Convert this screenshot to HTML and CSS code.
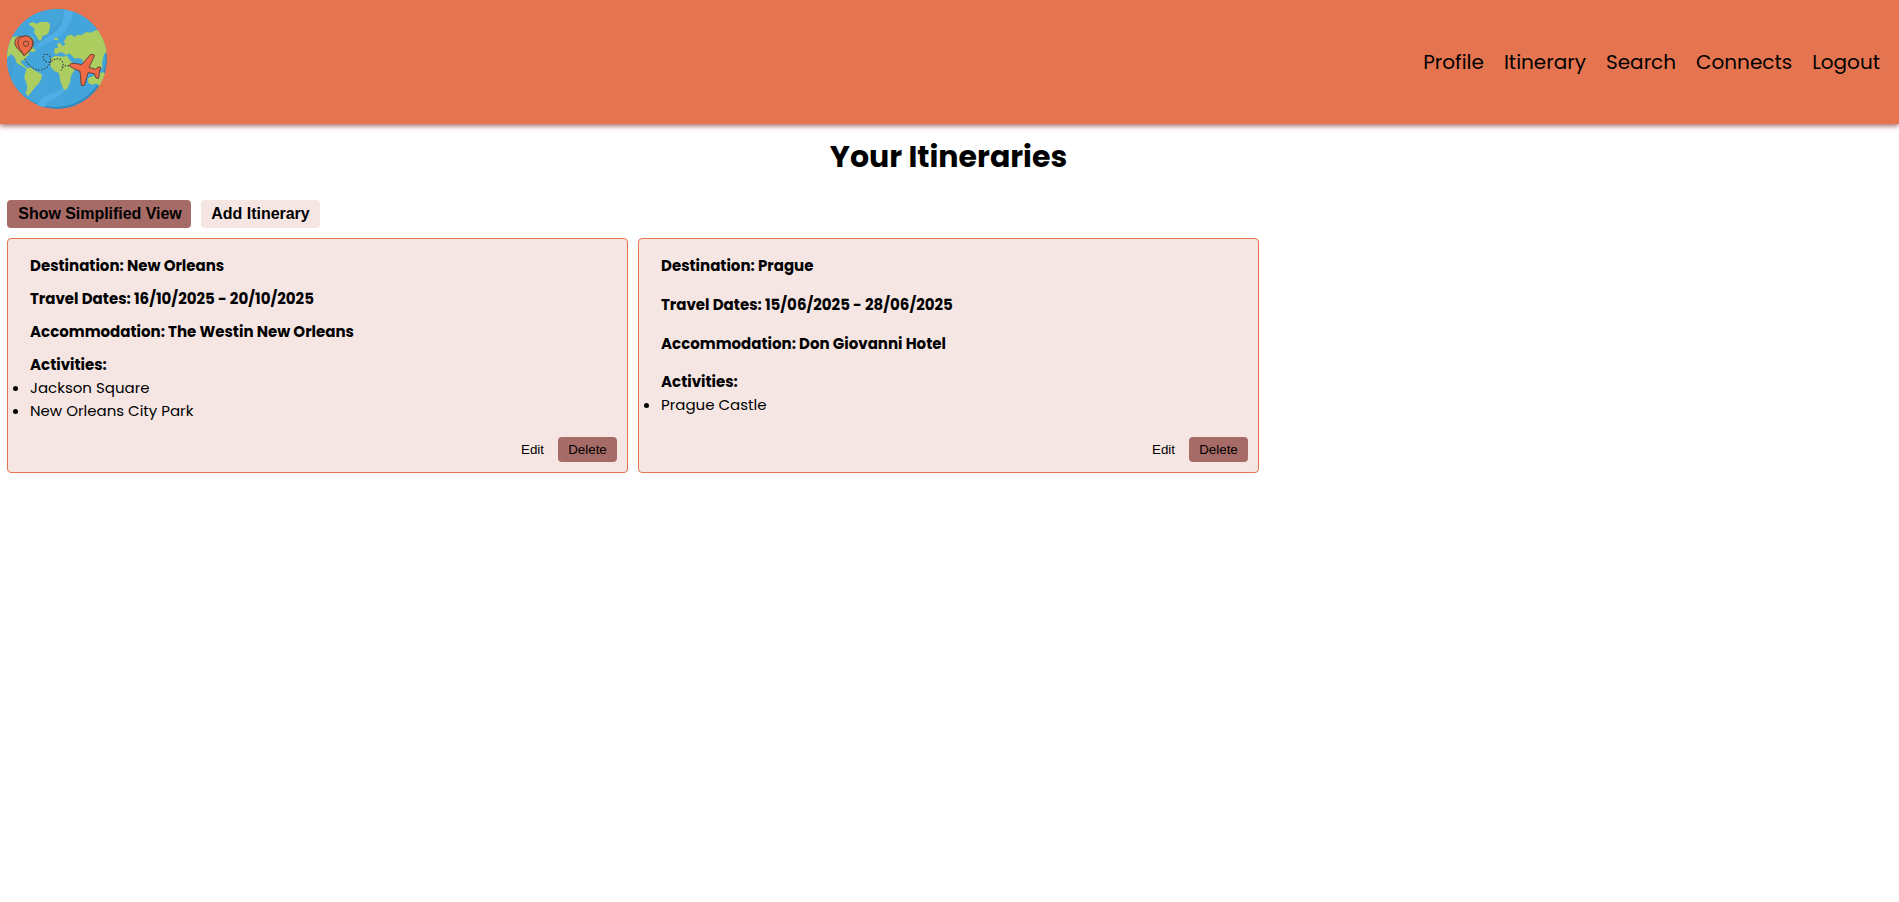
FILE: index.html
```html
<!DOCTYPE html>
<html lang="en">
<head>
<meta charset="utf-8">
<title>Your Itineraries</title>
<link rel="stylesheet" href="styles.css">
</head>
<body>
<header class="header">
  <svg class="logo" viewBox="0 0 300 300" aria-label="Travel globe">
    <defs><clipPath id="globe"><circle cx="150" cy="150" r="150"/></clipPath></defs>
    <g clip-path="url(#globe)">
      <circle cx="150" cy="150" r="150" fill="#318bc0"/>
      <circle cx="145" cy="143" r="151" fill="#43a5da"/>
      <path d="M170 0C180 50 139 86 98 99C46 115 18 148 15 205L0 205V120C25 112 73 105 98 90C140 65 164 42 165 0Z" fill="#459fd4"/>
      <path d="M169 0H199C197 38 177 75 141 94C120 105 99 110 83 123C98 95 116 87 137 74C163 57 173 30 169 0ZM86 300C92 275 112 257 137 252C158 248 180 232 181 208C189 230 173 251 152 263C132 273 116 278 111 300Z" fill="#4eaee5"/>
      <g fill="#accd60">
        <path d="M67 43L78 40L90 44L100 39L119 39L129 44V55L125 70L119 77L107 80L102 95L95 93L87 79L80 69L84 64L77 53L66 48Z"/>
        <path d="M0 106L17 84L45 80L68 82L79 89L78 119L88 121L79 130L67 127L65 139L55 146V155L47 153L40 159L47 165L55 174L64 177L61 181L49 174L29 162L23 145L12 135L0 147Z"/>
        <path d="M59 180L71 175L82 184L96 191L105 197L102 212L94 225L84 235L76 245L67 257L62 261L56 253L61 237L58 221L52 207L54 194Z"/>
        <path d="M141 133L143 118L154 116L151 107L158 101L164 107L167 112L176 105L170 99L180 81L193 77L203 84L211 77L223 79L237 69L252 71L266 64L300 62V128L291 136L287 154L278 162L271 174L262 158L249 160L244 177L235 166L225 151L214 147L203 149L195 140L185 132L179 139L168 131L157 130L150 136Z"/>
        <path d="M225 145L285 145L286 178L258 180L230 172Z"/>
        <path d="M132 148L145 140L166 143L180 141L188 153L199 166L210 170L199 190L192 201L190 217L182 236L176 244L168 238L160 216L156 192L142 186L130 172Z"/>
        <path d="M244 208L259 201L276 193L290 190L300 205L280 234L268 223L256 228L243 221Z"/>
        <path d="M139 91L147 85L155 91L150 94ZM150 106L155 102L153 113Z"/>
      </g>
      <path d="M53 149C61 164 76 182 98 183C118 182 132 168 131 149C129 137 117 132 109 138C105 151 119 165 132 158C142 149 157 145 165 156C170 163 170 174 162 184M165 175L176 170L189 171" fill="none" stroke="#363e48" stroke-width="3.4" stroke-dasharray="4.5 4.5"/>
      <g fill="#ef6a45" stroke="#624239" stroke-width="3" stroke-linejoin="round">
        <path d="M51 140C42 126 24 117 24 101C24 89 33 80 47 82C67 78 82 89 78 108C75 120 61 133 51 140Z"/>
        <path d="M51 140C45 126 33 116 33 101C34 88 43 82 56 81C71 82 79 94 77 108C74 120 60 132 51 140Z"/>
        <circle cx="57" cy="104" r="8"/>
        <path d="M187 168C194 158 211 165 224 167L250 137Q257 134 263 139L246 175L265 181L274 174L281 175L277 190L275 208L267 207L262 194L243 191L232 229L223 230L219 187C205 181 192 177 187 168Z"/>
      </g>
    </g>
  </svg>
  <nav class="nav">
    <a>Profile</a><a>Itinerary</a><a>Search</a><a>Connects</a><a>Logout</a>
  </nav>
</header>
<main class="main">
  <h1 class="title">Your Itineraries</h1>
  <div class="toolbar"><button class="btn toggle">Show Simplified View</button><button class="btn add">Add Itinerary</button></div>
  <section class="cards">
    <article class="card">
      <div class="details">
        <p>Destination: New Orleans</p>
        <p>Travel Dates: 16/10/2025 - 20/10/2025</p>
        <p>Accommodation: The Westin New Orleans</p>
        <div><p>Activities:</p><ul><li>Jackson Square</li><li>New Orleans City Park</li></ul></div>
      </div>
      <div class="actions"><button class="edit">Edit</button><button class="delete">Delete</button></div>
    </article>
    <article class="card">
      <div class="details loose">
        <p>Destination: Prague</p>
        <p>Travel Dates: 15/06/2025 - 28/06/2025</p>
        <p>Accommodation: Don Giovanni Hotel</p>
        <div><p>Activities:</p><ul><li>Prague Castle</li></ul></div>
      </div>
      <div class="actions"><button class="edit">Edit</button><button class="delete">Delete</button></div>
    </article>
  </section>
</main>
</body>
</html>
```
FILE: styles.css
```css
* { box-sizing: border-box; margin: 0; padding: 0; }
body { font-family: Poppins, Inter, sans-serif; color: #000; background: #fff; }
.header { height: 124px; padding: 9px 19px 0 7px; display: flex; justify-content: space-between; background: #e57550; box-shadow: 0 2px 5px #a76b67; }
.logo { width: 100px; height: 100px; }
.nav { display: flex; gap: 20px; padding-top: 38px; font-size: 20px; line-height: 30px; }
.nav a { white-space: nowrap; }
.main { padding: 10px 9px 10px 7px; }
.title { font-size: 30px; line-height: 45px; text-align: center; }
.toolbar { display: flex; gap: 10px; margin-top: 21px; }
.btn { height: 28px; padding: 0 10px; border: 0; border-radius: 4px; font: bold 16px/28px "Liberation Sans", sans-serif; letter-spacing: -0.03px; white-space: nowrap; color: #000; }
.toggle { width: 184px; padding: 0 9px 0 11px; letter-spacing: -0.04px; background: #a76b67; }
.add { width: 119px; background: #f5e6e3; }
.cards { display: grid; grid-template-columns: repeat(3, 1fr); gap: 10px; margin-top: 10px; }
.card { height: 235px; display: flex; flex-direction: column; justify-content: space-between; padding: 15px 10px 10px 22px; border: 1px solid #e57550; border-radius: 4px; background: #f5e6e3; }
.details { display: flex; flex-direction: column; gap: 10px; padding-top: 0.3px; font-size: 15px; line-height: 23px; }
.loose { gap: 15.67px; }
.details p { font-weight: 700; }
.actions { display: flex; justify-content: flex-end; gap: 4px; }
.edit, .delete { height: 25px; padding: 0 10px; border: 0; border-radius: 4px; font: 13.333px "Liberation Sans", sans-serif; color: #000; background: transparent; }
.delete { width: 59px; background: #a76b67; }
```
